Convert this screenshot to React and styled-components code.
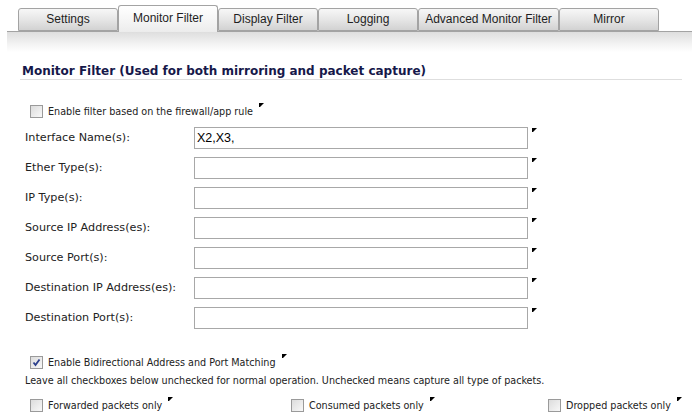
import React from "react";
import styled, { createGlobalStyle } from "styled-components";

const Global = createGlobalStyle`
  body {
    margin: 0;
    background: #fff;
    font-family: "DejaVu Sans Condensed", "DejaVu Sans", Verdana, sans-serif;
  }
`;

const tabs = [
  { label: "Settings", width: 100 },
  { label: "Monitor Filter", width: 100, active: true },
  { label: "Display Filter", width: 100 },
  { label: "Logging", width: 100 },
  { label: "Advanced Monitor Filter", width: 141 },
  { label: "Mirror", width: 100 },
];

const fields = [
  { label: "Interface Name(s):", value: "X2,X3," },
  { label: "Ether Type(s):", value: "" },
  { label: "IP Type(s):", value: "" },
  { label: "Source IP Address(es):", value: "" },
  { label: "Source Port(s):", value: "" },
  { label: "Destination IP Address(es):", value: "" },
  { label: "Destination Port(s):", value: "" },
];

function Marker() {
  return (
    <MarkIcon width="5" height="5" viewBox="0 0 5 5">
      <polygon points="0,0 5,0 1,4 0,4" fill="#000" />
    </MarkIcon>
  );
}

function Check({ checked }) {
  return (
    <Box>
      {checked && (
        <svg width="9" height="9" viewBox="0 0 9 9">
          <path d="M1.5 4.5 L3.5 7 L7.5 1.5" stroke="#2b3f8c" strokeWidth="1.8" fill="none" />
        </svg>
      )}
    </Box>
  );
}

export default function App() {
  return (
    <Page>
      <Global />
      <TabBar>
        {tabs.map((t) => (
          <Tab key={t.label} $active={t.active} $w={t.width}>
            {t.label}
          </Tab>
        ))}
      </TabBar>
      <Band />
      <Heading>Monitor Filter (Used for both mirroring and packet capture)</Heading>

      <CheckRow $top={22}>
        <Check />
        <span>Enable filter based on the firewall/app rule</span>
        <Marker />
      </CheckRow>

      <Fields>
        {fields.map((f) => (
          <FieldRow key={f.label}>
            <Label>{f.label}</Label>
            <Input defaultValue={f.value} />
            <Marker />
          </FieldRow>
        ))}
      </Fields>

      <CheckRow $top={24}>
        <Check checked />
        <span>Enable Bidirectional Address and Port Matching</span>
        <Marker />
      </CheckRow>
      <Note>
        Leave all checkboxes below unchecked for normal operation. Unchecked means capture all type of packets.
      </Note>
      <OptionGrid>
        <CheckRow>
          <Check />
          <span>Forwarded packets only</span>
          <Marker />
        </CheckRow>
        <CheckRow>
          <Check />
          <span>Consumed packets only</span>
          <Marker />
        </CheckRow>
        <CheckRow>
          <Check />
          <span>Dropped packets only</span>
          <Marker />
        </CheckRow>
      </OptionGrid>
    </Page>
  );
}

const Page = styled.div`
  width: 692px;
  height: 418px;
  overflow: hidden;
  font-size: 10.7px;
  color: #222;
`;

const TabBar = styled.div`
  display: flex;
  align-items: flex-end;
  height: 31px;
  margin-left: 7px;
  padding-left: 11px;
  border-bottom: 1px solid #a3a3a3;
`;

const Tab = styled.div`
  box-sizing: border-box;
  width: ${(p) => p.$w}px;
  height: ${(p) => (p.$active ? 27 : 23)}px;
  margin-bottom: ${(p) => (p.$active ? -1 : 0)}px;
  border: 1px solid #a3a3a3;
  border-bottom: ${(p) => (p.$active ? "none" : "1px solid #a3a3a3")};
  border-radius: 3px 3px 0 0;
  background: ${(p) =>
    p.$active
      ? "linear-gradient(#ffffff, #f4f4f4 60%, #ececec)"
      : "linear-gradient(#f7f7f7, #e6e6e6 50%, #d2d2d2)"};
  display: flex;
  align-items: center;
  justify-content: center;
  font-family: "Liberation Sans", Arial, sans-serif;
  font-size: 12px;
  color: #1e1e1e;
  padding-bottom: ${(p) => (p.$active ? 2 : 1)}px;
`;

const Band = styled.div`
  height: 20px;
  margin-left: 7px;
  background: linear-gradient(#dedede, #f6f6f6 70%, #ffffff);
`;

const Heading = styled.div`
  margin: 12px 10px 0 20px;
  padding: 0 0 1px 2px;
  border-bottom: 1px solid #dedede;
  font-family: "DejaVu Sans", Verdana, sans-serif;
  font-weight: bold;
  font-size: 12px;
  color: #16184a;
  line-height: 14px;
  white-space: nowrap;
`;

const CheckRow = styled.div`
  display: flex;
  align-items: center;
  height: 18px;
  margin-top: ${(p) => p.$top || 0}px;
  padding-left: 30px;
  gap: 5px;
  white-space: nowrap;
`;

const Box = styled.span`
  box-sizing: border-box;
  width: 13px;
  height: 13px;
  border: 1px solid #9a9a9a;
  background: linear-gradient(135deg, #dcdcdc, #f8f8f8);
  display: flex;
  align-items: center;
  justify-content: center;
`;

const MarkIcon = styled.svg`
  align-self: flex-start;
  margin-top: 1px;
  margin-left: 1px;
`;

const Fields = styled.div`
  display: flex;
  flex-direction: column;
  gap: 8px;
  margin-top: 7px;
`;

const FieldRow = styled.div`
  display: flex;
  align-items: flex-start;
  padding-left: 25px;
  height: 22px;
`;

const Label = styled.div`
  width: 169px;
  line-height: 22px;
  font-family: "DejaVu Sans", Verdana, sans-serif;
  font-size: 11.2px;
`;

const Input = styled.input`
  box-sizing: border-box;
  width: 334px;
  height: 22px;
  border: 1px solid #a8a8a8;
  padding: 0 2px;
  margin: 0 3px 0 0;
  font-family: "Liberation Sans", Arial, sans-serif;
  font-size: 12.5px;
  color: #000;
  outline: none;
`;

const Note = styled.div`
  padding-left: 25px;
  line-height: 19px;
  white-space: nowrap;
`;

const OptionGrid = styled.div`
  display: grid;
  grid-template-columns: 261px 257px 1fr;
  margin-top: 6px;
  padding-left: 30px;
  & > div {
    padding-left: 0;
  }
`;
